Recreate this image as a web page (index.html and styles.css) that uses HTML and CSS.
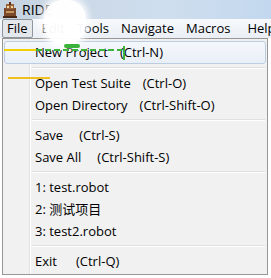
FILE: index.html
```html
<!DOCTYPE html>
<html lang="en">
<head>
  <meta charset="UTF-8">
  <title>RIDE</title>
  <link rel="stylesheet" href="styles.css">
</head>
<body>

  <!-- Title bar -->
  <div class="titlebar">
    <svg class="app-icon" width="16" height="16" viewBox="0 0 16 16">
      <rect x="2" y="6" width="12" height="9" fill="#7a4a2a"/>
      <rect x="4" y="2" width="8" height="5" fill="#9a6236"/>
      <rect x="7" y="0" width="2" height="3" fill="#5c3418"/>
      <rect x="5" y="4" width="2" height="2" fill="#f0d8a0"/>
      <rect x="9" y="4" width="2" height="2" fill="#f0d8a0"/>
      <rect x="4" y="9" width="8" height="2" fill="#c8965a"/>
      <rect x="1" y="14" width="14" height="2" fill="#4a2a14"/>
    </svg>
    <span class="title">RIDE</span>
  </div>

  <!-- Menu bar -->
  <div class="menubar">
    <span class="menu-item open">File</span>
    <span class="menu-item">Edit</span>
    <span class="menu-item">Tools</span>
    <span class="menu-item">Navigate</span>
    <span class="menu-item">Macros</span>
    <span class="menu-item menu-last">Help</span>
  </div>

  <!-- File menu -->
  <div class="popup">
    <div class="row hot">New Project<span class="key">(Ctrl-N)</span></div>
    <div class="sep"></div>
    <div class="row">Open Test Suite<span class="key">(Ctrl-O)</span></div>
    <div class="row">Open Directory<span class="key">(Ctrl-Shift-O)</span></div>
    <div class="sep"></div>
    <div class="row">Save<span class="key key-wide">(Ctrl-S)</span></div>
    <div class="row">Save All<span class="key key-wide">(Ctrl-Shift-S)</span></div>
    <div class="sep"></div>
    <div class="row">1: test.robot</div>
    <div class="row">2: 测试项目</div>
    <div class="row">3: test2.robot</div>
    <div class="sep"></div>
    <div class="row">Exit<span class="key key-exit">(Ctrl-Q)</span></div>
  </div>

  <!-- Marks drawn over the screenshot -->
  <div class="blob"></div>
  <div class="mark mark-yellow-1"></div>
  <div class="mark mark-yellow-2"></div>
  <div class="mark mark-green-dash"></div>
  <div class="mark mark-green-tick"></div>
  <div class="mark mark-green-blob"></div>

</body>
</html>
```

FILE: styles.css
```css
/* Global */
body {
  margin: 0;
  background: #fff;
  font-family: 'Open Sans', 'Noto Sans CJK SC', sans-serif;
  font-size: 12px;
  color: #000;
  width: 271px;
  height: 278px;
  overflow: hidden;
  position: relative;
}

/* Title bar */
.titlebar {
  height: 19px;
  display: flex;
  align-items: center;
  padding-left: 2px;
  background: linear-gradient(to right, #c6d3e0, #cfdeee 60%, #c3d8ee);
}

.app-icon {
  margin-right: 4px;
}

.title {
  font-size: 14px;
}

/* Menu bar */
.menubar {
  height: 19px;
  display: flex;
  align-items: center;
  padding-left: 2px;
  background: linear-gradient(#f7f9fc, #eaeff5);
  font-size: 13px;
  white-space: nowrap;
  overflow: hidden;
}

.menu-item {
  padding: 0 5px;
  line-height: 17px;
  border: 1px solid transparent;
}

.menu-item.open {
  background: #e4e7eb;
  border-color: #8f959c;
  border-radius: 2px;
  padding: 0 4px;
  margin-right: 3px;
}

.menu-last {
  margin-left: 5px;
}

/* Dropdown */
.popup {
  margin-left: 2px;
  width: 260px;
  padding: 2px;
  border: 1px solid #979797;
  background:
    linear-gradient(to right, transparent 26px, #e2e3e3 26px, #e2e3e3 27px, #fff 27px, #fff 28px, transparent 28px),
    #f1f1f1;
  font-size: 13px;
}

.row {
  height: 20px;
  line-height: 20px;
  padding-left: 30px;
  white-space: nowrap;
  border: 1px solid transparent;
  margin: 0 -1px;
}

.row.hot {
  height: 21px;
  line-height: 21px;
  border-color: #bccde2;
  border-radius: 3px;
  background: linear-gradient(#f5f8fc, #e9eff7);
}

.key {
  margin-left: 12px;
}

.key-wide {
  margin-left: 16px;
}

.key-exit {
  margin-left: 19px;
}

.sep {
  height: 8px;
  margin-left: 27px;
  display: flex;
  align-items: center;
}

.sep::before {
  content: "";
  flex: 1;
  height: 1px;
  background: #e0e0e0;
  border-bottom: 1px solid #fff;
}

/* Overlay marks */
.blob {
  position: absolute;
  left: 44px;
  top: 0;
  width: 42px;
  height: 46px;
  border-radius: 40% 40% 50% 50%;
  background: rgba(255, 255, 255, 0.97);
  box-shadow: 0 0 6px 3px rgba(255, 255, 255, 0.85);
}

.mark {
  position: absolute;
}

.mark-yellow-1 {
  left: 4px;
  top: 49px;
  width: 32px;
  height: 2px;
  background: #f2d000;
}

.mark-yellow-2 {
  left: 8px;
  top: 77px;
  width: 42px;
  height: 2px;
  background: #f0c020;
}

.mark-green-dash {
  left: 36px;
  top: 49px;
  width: 86px;
  height: 2px;
  background: repeating-linear-gradient(to right, #3cb43c 0, #3cb43c 6px, transparent 6px, transparent 9px);
}

.mark-green-tick {
  left: 123px;
  top: 46px;
  width: 2px;
  height: 14px;
  background: #3cb43c;
}

.mark-green-blob {
  left: 64px;
  top: 44px;
  width: 16px;
  height: 4px;
  border-radius: 2px;
  background: #3cb43c;
}
```
